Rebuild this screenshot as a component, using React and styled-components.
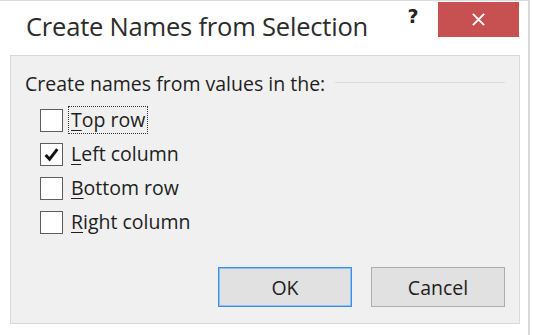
import React from 'react';
import styled, { createGlobalStyle } from 'styled-components';

const Global = createGlobalStyle`
  html, body {
    margin: 0;
    padding: 0;
    background: #ffffff;
  }
  body {
    font-family: "Open Sans", "Noto Sans", sans-serif;
  }
`;

const options = [
  { key: 'T', rest: 'op row', checked: false, focused: true },
  { key: 'L', rest: 'eft column', checked: true },
  { key: 'B', rest: 'ottom row', checked: false },
  { key: 'R', rest: 'ight column', checked: false },
];

const CreateNamesDialog = () => {
  return (
    <Window>
      <TitleBar>
        <Title>Create Names from Selection</Title>
        <HelpButton>?</HelpButton>
        <CloseButton>
          <svg width="15" height="15" viewBox="0 0 16 16">
            <path d="M2 2 L14 14 M14 2 L2 14" stroke="#ffffff" strokeWidth="2" />
          </svg>
        </CloseButton>
      </TitleBar>
      <Panel>
        <GroupHeader>
          <GroupLabel>Create names from values in the:</GroupLabel>
          <GroupLine />
        </GroupHeader>
        <OptionList>
          {options.map((o) => (
            <Option key={o.key}>
              <Box>
                {o.checked && (
                  <svg width="17" height="17" viewBox="0 0 16 16">
                    <path d="M2.5 8.5 L6.2 12.5 L13.5 3" stroke="#111" strokeWidth="2.8" fill="none" />
                  </svg>
                )}
              </Box>
              <OptionLabel focused={o.focused}>
                <Key>{o.key}</Key>{o.rest}
              </OptionLabel>
            </Option>
          ))}
        </OptionList>
        <Buttons>
          <Button primary>OK</Button>
          <Button>Cancel</Button>
        </Buttons>
      </Panel>
    </Window>
  );
};

const Window = styled.div`
  width: 530px;
  height: 335px;
  box-sizing: border-box;
  background: #ffffff;
  border-top: 1px solid #dcdcdc;
  border-right: 2px solid #d8d8d8;
  padding-right: 8px;
  display: flex;
  flex-direction: column;
`;

const TitleBar = styled.div`
  height: 53px;
  display: flex;
  align-items: flex-start;
  padding-left: 26px;
`;

const Title = styled.div`
  flex: 1;
  margin-top: 8px;
  font-size: 25.5px;
  color: #2b2b2b;
  letter-spacing: -0.2px;
`;

const HelpButton = styled.div`
  width: 30px;
  margin-top: 4px;
  margin-right: 10px;
  font-family: "DejaVu Sans", sans-serif;
  font-weight: bold;
  font-size: 19px;
  color: #222;
  text-align: center;
`;

const CloseButton = styled.div`
  width: 81px;
  height: 35px;
  margin-top: 1px;
  margin-right: 1px;
  background: #c75050;
  display: flex;
  align-items: center;
  justify-content: center;
`;

const Panel = styled.div`
  flex: 1;
  margin: 1px 0 11px 10px;
  background: #f0f0f0;
  border: 1px solid #d9d9d9;
  display: flex;
  flex-direction: column;
  padding: 14px 14px 16px 14px;
`;

const GroupHeader = styled.div`
  display: flex;
  align-items: center;
  gap: 10px;
`;

const GroupLabel = styled.div`
  font-size: 19.5px;
  color: #1e1e1e;
`;

const GroupLine = styled.div`
  flex: 1;
  height: 1px;
  background: #dcdcdc;
  margin-top: -2px;
`;

const OptionList = styled.div`
  display: flex;
  flex-direction: column;
  gap: 8px;
  margin-top: 10px;
  padding-left: 15px;
`;

const Option = styled.div`
  display: flex;
  align-items: center;
  height: 26px;
`;

const Box = styled.div`
  width: 21px;
  height: 21px;
  background: #ffffff;
  border: 1px solid #5e5e5e;
  display: flex;
  align-items: center;
  justify-content: center;
`;

const OptionLabel = styled.div`
  margin-left: 5px;
  padding: 0 2px;
  font-size: 19.5px;
  color: #1e1e1e;
  line-height: 26px;
  border: 1px dotted ${(p) => (p.focused ? '#333' : 'transparent')};
`;

const Key = styled.span`
  text-decoration: underline;
  text-underline-offset: 3px;
`;

const Buttons = styled.div`
  margin-top: auto;
  display: flex;
  justify-content: flex-end;
  gap: 19px;
`;

const Button = styled.div`
  width: 134px;
  height: 40px;
  box-sizing: border-box;
  background: #e1e1e1;
  border: 1px solid ${(p) => (p.primary ? '#3c8ee6' : '#adadad')};
  box-shadow: ${(p) => (p.primary ? 'inset 0 0 0 1px #8cc0f0' : 'none')};
  display: flex;
  align-items: center;
  justify-content: center;
  font-size: 19.5px;
  color: #1e1e1e;
`;

export default function App() {
  return (
    <>
      <Global />
      <CreateNamesDialog />
    </>
  );
}
